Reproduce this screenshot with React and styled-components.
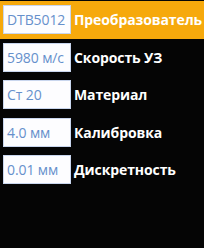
import React from 'react';
import styled, { createGlobalStyle } from 'styled-components';

const GlobalStyle = createGlobalStyle`
  html, body {
    margin: 0;
    padding: 0;
    background: #050505;
  }
  body {
    width: 204px;
    height: 248px;
    overflow: hidden;
  }
`;

const items = [
  { value: 'DTB5012', label: 'Преобразователь', active: true },
  { value: '5980 м/с', label: 'Скорость УЗ' },
  { value: 'Ст 20', label: 'Материал' },
  { value: '4.0 мм', label: 'Калибровка' },
  { value: '0.01 мм', label: 'Дискретность' },
];

export default function App() {
  return (
    <>
      <GlobalStyle />
      <Screen>
        {items.map((item) => (
          <Row key={item.label} active={item.active}>
            <ValueBox>{item.value}</ValueBox>
            <Label>{item.label}</Label>
          </Row>
        ))}
      </Screen>
    </>
  );
}

const Screen = styled.div`
  width: 204px;
  height: 248px;
  padding-top: 1px;
  box-sizing: border-box;
  background: #050505;
  display: flex;
  flex-direction: column;
  overflow: hidden;
`;

const Row = styled.div.withConfig({ shouldForwardProp: (p) => p !== 'active' })`
  height: 37.5px;
  flex: none;
  display: flex;
  align-items: center;
  gap: 3px;
  padding-left: 3px;
  background: ${(p) => (p.active ? '#f6a90c' : 'transparent')};
  white-space: nowrap;
  overflow: hidden;
`;

const ValueBox = styled.div`
  width: 68px;
  height: 29px;
  flex: none;
  box-sizing: border-box;
  background: #fdfdff;
  border: 1px solid #c9d6ee;
  display: flex;
  align-items: center;
  padding-left: 3px;
  font-family: 'Open Sans', sans-serif;
  font-size: 14px;
  letter-spacing: -0.1px;
  color: #6690cc;
  overflow: hidden;
`;

const Label = styled.span`
  font-family: 'Open Sans', sans-serif;
  font-weight: 700;
  font-size: 14px;
  color: #ffffff;
  letter-spacing: -0.1px;
`;
